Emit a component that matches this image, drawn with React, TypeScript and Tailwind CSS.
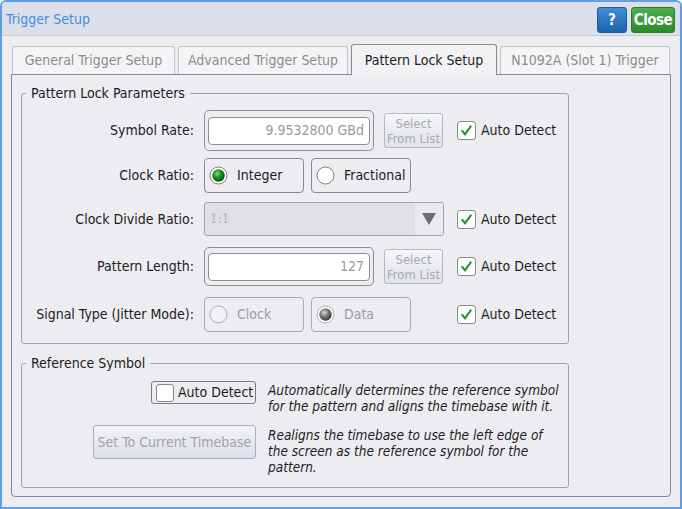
import React from 'react'

function Check({ checked }: { checked: boolean }) {
  return (
    <span className="w-[19px] h-[19px] shrink-0 bg-white border border-[#8a8a8a] rounded-[3px] flex items-center justify-center">
      {checked && (
        <svg width="13" height="13" viewBox="0 0 13 13">
          <path d="M2.2 6.8 L5 10.2 L10.8 2.4" fill="none" stroke="#22962c" strokeWidth="2.1" strokeLinecap="round" />
        </svg>
      )}
    </span>
  )
}

type RadioState = 'on' | 'off' | 'disabled' | 'disabledOn'

function RadioDot({ state }: { state: RadioState }) {
  return (
    <svg width="19" height="19" viewBox="0 0 19 19" className="shrink-0">
      <defs>
        <radialGradient id="rg-green" cx="40%" cy="35%" r="65%">
          <stop offset="0%" stopColor="#7fe07f" />
          <stop offset="45%" stopColor="#1f9a2a" />
          <stop offset="100%" stopColor="#0b4d12" />
        </radialGradient>
        <radialGradient id="rg-gray" cx="40%" cy="35%" r="65%">
          <stop offset="0%" stopColor="#d8d8d8" />
          <stop offset="50%" stopColor="#7a7a7a" />
          <stop offset="100%" stopColor="#3a3a3a" />
        </radialGradient>
      </defs>
      <circle
        cx="9.5"
        cy="9.5"
        r="8.5"
        fill={state === 'disabled' ? '#f2f2f4' : '#ffffff'}
        stroke={state === 'disabled' || state === 'disabledOn' ? '#adadb0' : '#7c7c7c'}
        strokeWidth="1"
      />
      {state === 'on' && <circle cx="9.5" cy="9.5" r="6.2" fill="url(#rg-green)" />}
      {state === 'disabledOn' && <circle cx="9.5" cy="9.5" r="6.2" fill="url(#rg-gray)" />}
    </svg>
  )
}

function RadioBox({ label, state, className = '' }: { label: string; state: RadioState; className?: string }) {
  const dim = state === 'disabled' || state === 'disabledOn'
  return (
    <div
      className={
        'w-[100px] h-[35px] rounded-[4px] flex items-center pl-[4px] gap-[9px] ' +
        (dim ? 'border border-[#a9a9ac] text-[#9c9c9c] ' : 'border-[1.5px] border-[#8a8a8a] text-[#1c1c1c] ') +
        className
      }
    >
      <RadioDot state={state} />
      <span>{label}</span>
    </div>
  )
}

function FramedInput({ value, h }: { value: string; h: string }) {
  return (
    <div className={'w-[170px] border-[1.5px] border-[#8e8e8e] rounded-[5px] px-[3px] flex items-center ' + h}>
      <div className="w-full h-[28px] bg-white border border-[#8e8e8e] rounded-[4px] flex items-center justify-end pr-[5px] text-[#9a9a9a]">
        {value}
      </div>
    </div>
  )
}

function SelectBtn() {
  return (
    <div className="ml-[10px] w-[59px] h-[35px] border border-[#b4b8c4] rounded-[3px] bg-linear-to-b from-[#f5f6fa] to-[#dfe2ea] flex flex-col items-center justify-center text-[13px] leading-[15px] text-[#a8a8a8]">
      <span>Select</span>
      <span>From List</span>
    </div>
  )
}

function Row({
  label,
  check,
  className = '',
  children,
}: {
  label: string
  check?: boolean
  className?: string
  children: React.ReactNode
}) {
  return (
    <div className={'flex items-center ' + className}>
      <div className="w-[172px] text-right text-[#1c1c1c] whitespace-nowrap">{label}</div>
      <div className="ml-[10px] w-[253px] flex items-center">{children}</div>
      {check && (
        <>
          <Check checked />
          <span className="ml-[5px] text-[#1c1c1c] whitespace-nowrap">Auto Detect</span>
        </>
      )}
    </div>
  )
}

export default function App() {
  return (
    <div className="w-[682px] h-[509px] font-['DejaVu_Sans_Condensed','Liberation_Sans',sans-serif] text-[14px] leading-[17px] text-[#1c1c1c]">
      <div className="w-full h-full border-2 border-[#5f9ee8] rounded-t-[6px] bg-[#ececf1] flex flex-col overflow-hidden">
        {/* title bar */}
        <div className="h-[34px] shrink-0 bg-[#dcdfea] border-b border-[#c6c9d6] flex items-center pl-[4px] pr-[5px]">
          <span className="text-[#3f8ee3] text-[14px] mt-[2px]">Trigger Setup</span>
          <div className="ml-auto flex items-center gap-[4px] mt-[3px]">
            <div className="w-[30px] h-[26px] rounded-[3px] border border-[#1d5a98] bg-linear-to-b from-[#3f8fd6] to-[#1c62a8] flex items-center justify-center text-white font-bold text-[15px]">
              ?
            </div>
            <div className="w-[44px] h-[26px] rounded-[3px] border border-[#2a7a2a] bg-linear-to-b from-[#4cae4c] to-[#2d8a2d] flex items-center justify-center text-white font-bold text-[15px] tracking-[-0.5px]">
              Close
            </div>
          </div>
        </div>

        {/* tabs */}
        <div className="px-[9px] pt-[8px] flex flex-col flex-1 pb-[10px]">
          <div className="flex items-end gap-[3px] pl-[1px]">
            <div className="w-[163px] h-[28px] border border-b-0 border-[#c4c4c8] rounded-t-[3px] bg-[#f4f4f7] flex items-center justify-center text-[#8c8c8c]">
              General Trigger Setup
            </div>
            <div className="w-[170px] h-[28px] border border-b-0 border-[#c4c4c8] rounded-t-[3px] bg-[#f4f4f7] flex items-center justify-center text-[#8c8c8c]">
              Advanced Trigger Setup
            </div>
            <div className="w-[146px] h-[31px] border border-b-0 border-[#8a8a8e] rounded-t-[3px] bg-[#f2f2f5] flex items-center justify-center text-[#1c1c1c] -mb-px relative z-10">
              Pattern Lock Setup
            </div>
            <div className="w-[170px] h-[28px] border border-b-0 border-[#c4c4c8] rounded-t-[3px] bg-[#f4f4f7] flex items-center justify-center text-[#8c8c8c]">
              N1092A (Slot 1) Trigger
            </div>
          </div>

          {/* panel */}
          <div className="flex-1 border border-[#8a8a8e] rounded-b-[4px] bg-[#ececf1] pt-[10px] pl-[9px]">
            <fieldset className="w-[548px] border border-[#a2a2a6] rounded-[3px] pb-[11px]">
              <legend className="ml-[4px] px-[5px] leading-[17px]">Pattern Lock Parameters</legend>
              <Row label="Symbol Rate:" check className="mt-[8px]">
                <FramedInput value="9.9532800 GBd" h="h-[41px]" />
                <SelectBtn />
              </Row>
              <Row label="Clock Ratio:" className="mt-[7px]">
                <RadioBox label="Integer" state="on" />
                <RadioBox label="Fractional" state="off" className="ml-[7px]" />
              </Row>
              <Row label="Clock Divide Ratio:" check className="mt-[9px]">
                <div className="w-[240px] h-[34px] border border-[#a2a2a8] rounded-[3px] bg-[#e0e0e4] flex overflow-hidden">
                  <div className="flex-1 flex items-center pl-[5px] text-[12px] text-[#b2b2b2] font-['DejaVu_Serif',serif]">
                    1:1
                  </div>
                  <div className="w-[28px] bg-[#e9e9ee] flex items-center justify-center">
                    <svg width="14" height="12" viewBox="0 0 14 12">
                      <path d="M0 0 L14 0 L7 12 Z" fill="#6e6e70" />
                    </svg>
                  </div>
                </div>
              </Row>
              <Row label="Pattern Length:" check className="mt-[11px]">
                <FramedInput value="127" h="h-[39px]" />
                <SelectBtn />
              </Row>
              <Row label="Signal Type (Jitter Mode):" check className="mt-[11px]">
                <RadioBox label="Clock" state="disabled" />
                <RadioBox label="Data" state="disabledOn" className="ml-[7px]" />
              </Row>
            </fieldset>

            <fieldset className="w-[548px] border border-[#a2a2a6] rounded-[3px] pb-[12px] mt-[11px]">
              <legend className="ml-[4px] px-[5px] leading-[17px]">Reference Symbol</legend>
              <div className="flex items-start mt-[9px]">
                <div className="w-[234px] flex justify-end">
                  <div className="w-[105px] h-[23px] border border-[#7c7c7c] rounded-[3px] flex items-center pl-[4px] gap-[4px] whitespace-nowrap">
                    <span className="w-[18px] h-[18px] shrink-0 bg-white border border-[#8a8a8a] rounded-[3px]" />
                    <span>Auto Detect</span>
                  </div>
                </div>
                <div className="ml-[12px] mt-[1px] italic text-[13.5px] leading-[16px] whitespace-nowrap">
                  Automatically determines the reference symbol
                  <br />
                  for the pattern and aligns the timebase with it.
                </div>
              </div>
              <div className="flex items-start mt-[11px]">
                <div className="w-[234px] flex justify-end">
                  <div className="w-[163px] h-[34px] border border-[#abafbb] rounded-[3px] bg-linear-to-b from-[#f1f2f7] to-[#dcdfe7] flex items-center justify-center text-[#a2a2a2] whitespace-nowrap">
                    Set To Current Timebase
                  </div>
                </div>
                <div className="ml-[12px] mt-[2px] italic text-[13.5px] leading-[16px] whitespace-nowrap">
                  Realigns the timebase to use the left edge of
                  <br />
                  the screen as the reference symbol for the
                  <br />
                  pattern.
                </div>
              </div>
            </fieldset>
          </div>
        </div>
      </div>
    </div>
  )
}
